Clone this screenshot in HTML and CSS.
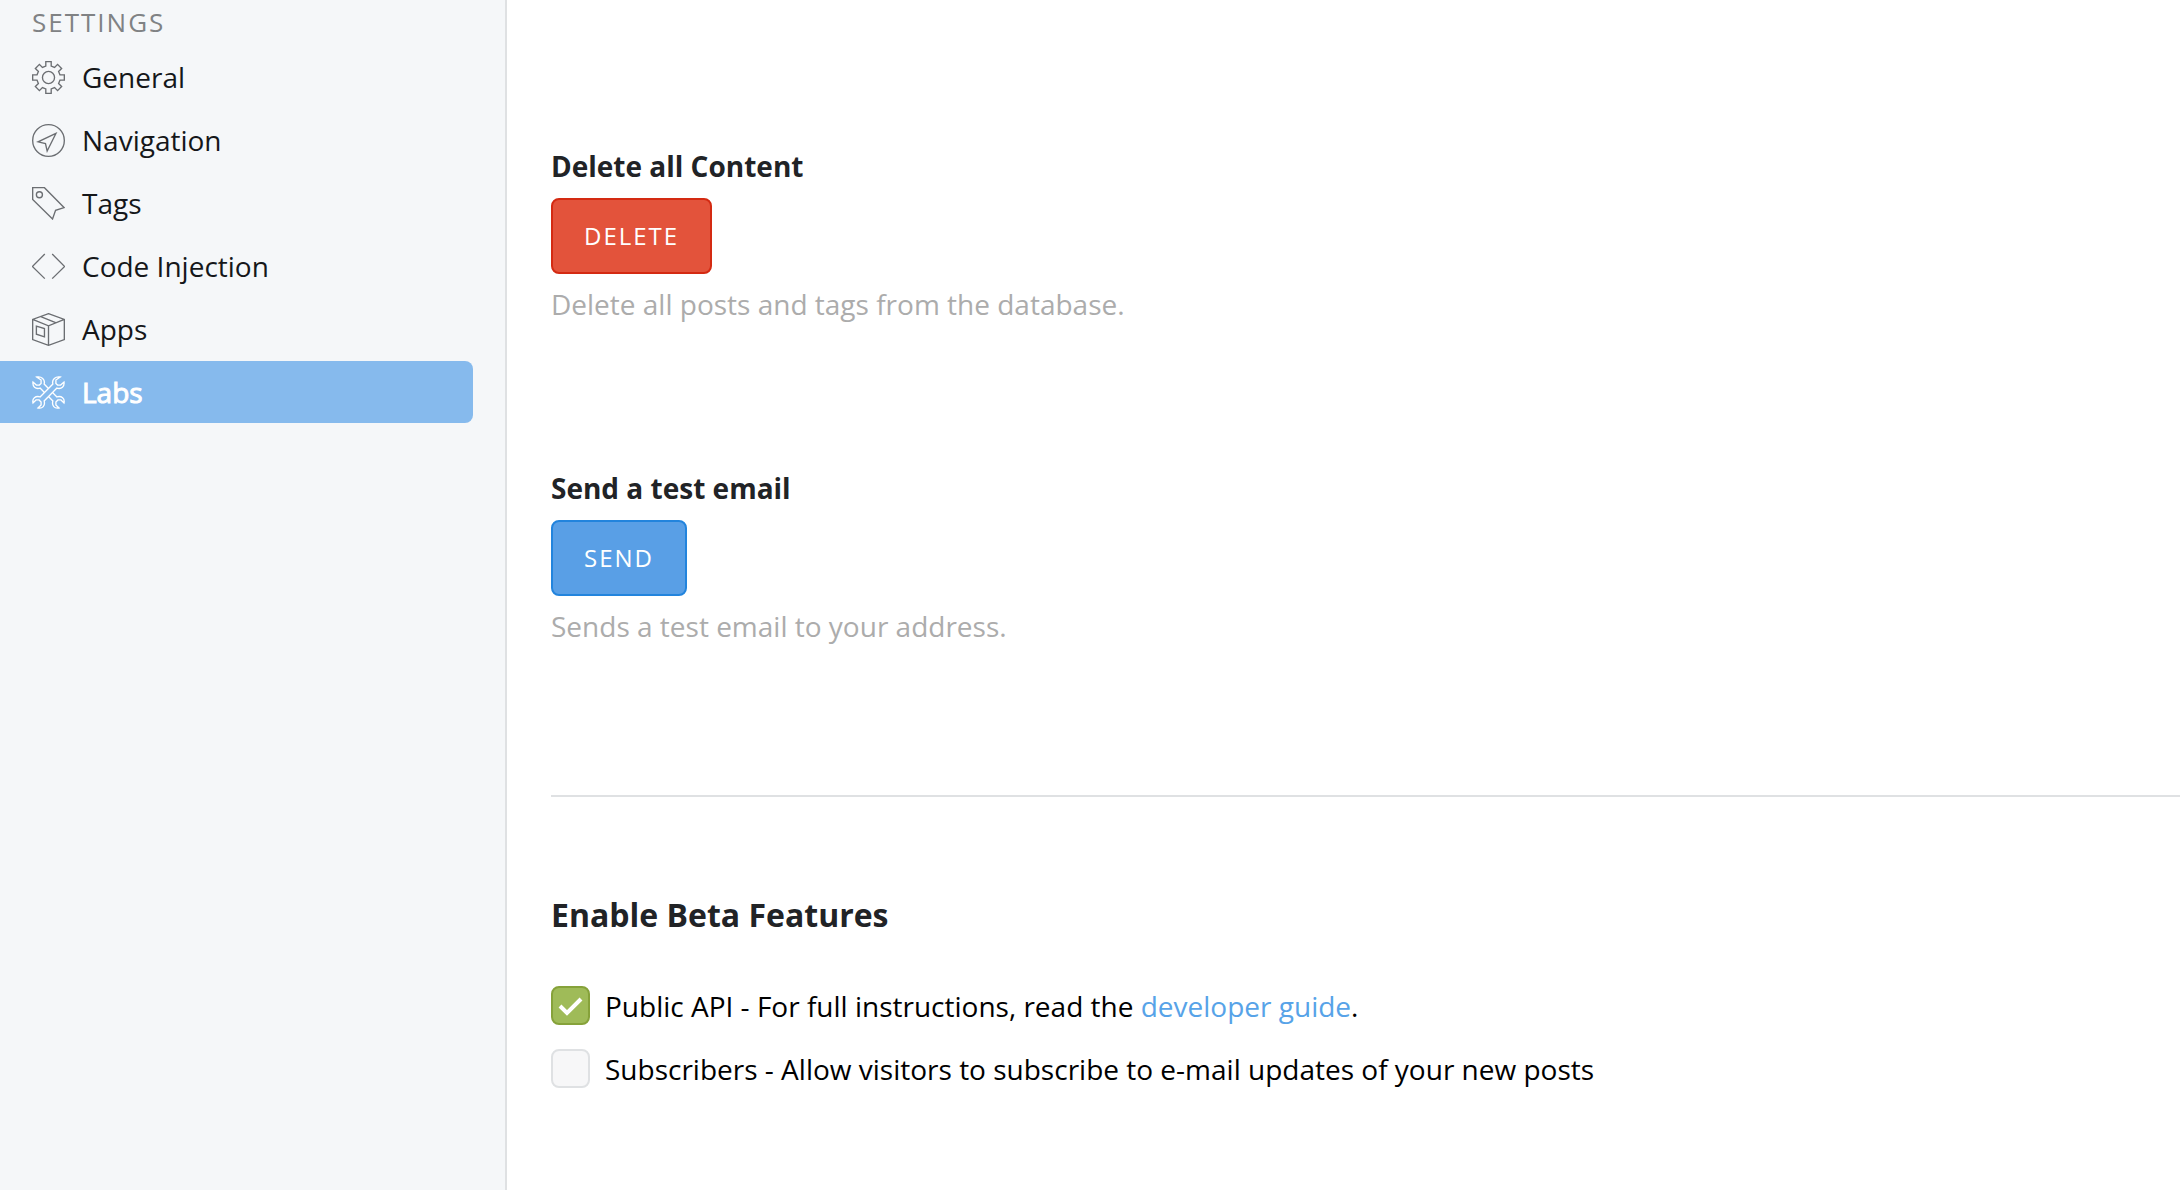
FILE: index.html
```html
<!DOCTYPE html>
<html lang="en">
<head>
<meta charset="utf-8">
<meta name="viewport" content="width=device-width, initial-scale=1">
<title>Settings - Labs</title>
<link rel="stylesheet" href="styles.css">
</head>
<body>
<div class="app">
  <nav class="sidebar" aria-labelledby="nav-title">
    <h2 class="sidebar-title" id="nav-title">Settings</h2>
    <ul class="nav-list">
      <li><a class="nav-item" href="#general">
        <svg class="icon" viewBox="0 0 98 98" aria-hidden="true"><path d="M41 2H57V15L67 19L76 10L88 22L79 31L83 41H96V57H83L79 67L88 76L76 88L67 79L57 83V96H41V83L31 79L22 88L10 76L19 67L15 57H2V41H15L19 31L10 22L22 10L31 19L41 15Z"/><circle cx="49" cy="49" r="18"/></svg>
        General</a></li>
      <li><a class="nav-item" href="#navigation">
        <svg class="icon" viewBox="0 0 98 98" aria-hidden="true"><circle cx="49" cy="49" r="47"/><path d="M71 28L18 53L40 58L45 80Z"/></svg>
        Navigation</a></li>
      <li><a class="nav-item" href="#tags">
        <svg class="icon" viewBox="0 0 98 98" aria-hidden="true"><path d="M2 2H37L95 61L70 69L61 95L2 37Z"/><circle cx="22" cy="23" r="9"/></svg>
        Tags</a></li>
      <li><a class="nav-item" href="#code-injection">
        <svg class="icon" viewBox="0 0 98 98" aria-hidden="true"><path d="M38 12L1 49L38 85M60 12L97 49L60 85"/></svg>
        Code Injection</a></li>
      <li><a class="nav-item" href="#apps">
        <svg class="icon" viewBox="0 0 98 98" aria-hidden="true"><path d="M49 2L96 19V79L49 96L2 79V19ZM2 19L49 38L96 19M49 38V96M26 11L72 29M13 39L37 46V71L13 63Z"/></svg>
        Apps</a></li>
      <li><a class="nav-item nav-item-active" href="#labs" aria-current="page">
        <svg class="icon" viewBox="0 0 98 98" aria-hidden="true"><path d="M84 3L71 12V22L76 27H85L95 18C97 31 88 40 74 36L36 74C40 88 31 98 18 95L27 86V77L21 71H12L3 80C0 67 10 58 24 62L62 24C58 10 70 0 84 3Z"/><path d="M49 37L36 24C40 10 28 0 14 3L27 12V22L22 27H13L3 18C1 31 10 40 24 36L37 49M49 61L62 74C58 88 67 98 80 95L71 86V77L77 71H86L95 80C98 67 88 58 74 62L61 49"/></svg>
        Labs</a></li>
    </ul>
  </nav>
  <main class="content">
    <section class="setting">
      <h3 class="setting-title">Delete all Content</h3>
      <button class="btn btn-red" type="button">Delete</button>
      <p class="setting-help">Delete all posts and tags from the database.</p>
    </section>
    <section class="setting">
      <h3 class="setting-title">Send a test email</h3>
      <button class="btn btn-blue" type="button">Send</button>
      <p class="setting-help">Sends a test email to your address.</p>
    </section>
    <hr class="divider">
    <section class="beta">
      <h2 class="beta-title">Enable Beta Features</h2>
      <div class="check-row">
        <input class="check" type="checkbox" id="public-api" checked>
        <label for="public-api">Public API - For full instructions, read the <a class="link" href="#guide">developer guide</a>.</label>
      </div>
      <div class="check-row">
        <input class="check" type="checkbox" id="subscribers">
        <label for="subscribers">Subscribers - Allow visitors to subscribe to e-mail updates of your new posts</label>
      </div>
    </section>
  </main>
</div>
</body>
</html>
```
FILE: styles.css
```css
* {
  box-sizing: border-box;
}

body {
  margin: 0;
  background: #fff;
  color: #000;
  font-family: "Open Sans", sans-serif;
  font-size: 28px;
  line-height: 40px;
}

h2, h3, p, ul {
  margin: 0;
  padding: 0;
}

.app {
  display: flex;
  min-height: 100vh;
}

/* Sidebar */
.sidebar {
  flex: 0 0 507px;
  padding-right: 32px;
  background: #f5f7f9;
  border-right: 2px solid #dfe1e3;
}

.sidebar-title {
  padding-left: 32px;
  height: 46px;
  color: #808284;
  font-size: 26px;
  font-weight: 400;
  line-height: 44px;
  letter-spacing: 2px;
  text-transform: uppercase;
}

.nav-list {
  display: flex;
  flex-direction: column;
  gap: 1px;
  list-style: none;
}

.nav-item {
  display: flex;
  align-items: center;
  gap: 17px;
  height: 62px;
  padding-left: 32px;
  border-radius: 0 8px 8px 0;
  color: #15171a;
  text-decoration: none;
}

.nav-item-active {
  background: #86baed;
  color: #fff;
  -webkit-text-stroke: 1px #fff;
}

.icon {
  flex: none;
  width: 33px;
  height: 33px;
  fill: none;
  stroke: #6b6e72;
  stroke-width: 4;
}

.nav-item-active .icon {
  stroke: #fff;
}

/* Content */
.content {
  flex: 1;
  padding: 146px 0 0 44px;
}

.setting {
  display: flex;
  flex-direction: column;
  align-items: flex-start;
  height: 322px;
}

.setting-title {
  color: #212326;
  font-size: 28px;
  font-weight: 700;
}

.btn {
  height: 76px;
  margin: 12px 0 10px;
  padding: 0 31px;
  border: 2px solid;
  border-radius: 8px;
  color: #fff;
  font: 24px/40px "Open Sans", sans-serif;
  letter-spacing: 2px;
  text-transform: uppercase;
}

.btn-red {
  background: #e3533b;
  border-color: #d42a12;
}

.btn-blue {
  background: #599fe6;
  border-color: #2284dd;
}

.setting-help {
  color: #acacac;
}

.divider {
  height: 2px;
  margin: 5px 0 0;
  border: 0;
  background: #dfe1e3;
}

.beta {
  padding-top: 98px;
}

.beta-title {
  margin-bottom: 39px;
  color: #212326;
  font-size: 32px;
  font-weight: 700;
  line-height: 40px;
}

.check-row {
  display: flex;
  align-items: center;
  gap: 15px;
  height: 63px;
}

.check {
  flex: none;
  appearance: none;
  width: 39px;
  height: 39px;
  margin: 0;
  border: 2px solid #dfe1e3;
  border-radius: 8px;
  background: #f7f7f8;
}

.check:checked {
  border-color: #86a23a;
  background: #9fbb58 url("data:image/svg+xml,%3Csvg xmlns='http://www.w3.org/2000/svg' viewBox='0 0 35 35'%3E%3Cpath d='M7 18L14 25L28 11' fill='none' stroke='white' stroke-width='4'/%3E%3C/svg%3E") center / 35px 35px no-repeat;
}

.link {
  color: #57a3e8;
  text-decoration: none;
}
```
